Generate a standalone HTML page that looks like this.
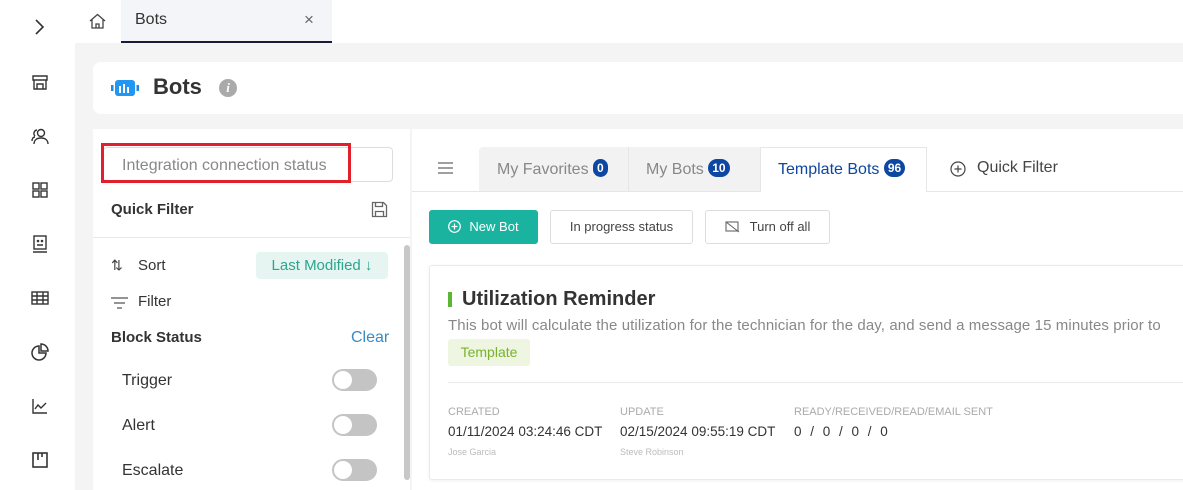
<!DOCTYPE html>
<html><head><style>
*{box-sizing:border-box;margin:0;padding:0}
body{width:1183px;height:490px;overflow:hidden;background:#f4f4f5;font-family:"Liberation Sans",sans-serif;color:#333;position:relative}
.abs{position:absolute}
.side{left:0;top:0;width:75px;height:490px;background:#fff}
.ic{position:absolute;left:31px;width:18px;height:18px}
.tog{position:absolute;left:332px;width:45px;height:22px;border-radius:11px;background:#c4c4c4}
.tog:after{content:"";position:absolute;left:2px;top:2px;width:18px;height:18px;border-radius:50%;background:#fff}
.badge{display:inline-block;background:#0d47a1;color:#fff;border-radius:9px;font-size:12px;font-weight:bold;padding:2px 4px;line-height:14px;vertical-align:2px}
.btn{position:absolute;top:210px;height:34px;border:1px solid #ddd;border-radius:3px;background:#fff;font-size:13px;color:#444;line-height:32px;text-align:center}
</style></head><body>
<div class="abs side">
<svg class="ic" style="top:18px" viewBox="0 0 18 18"><path d="M5 2l7 7-7 7" fill="none" stroke="#333" stroke-width="1.6"/></svg>
<svg class="ic" style="top:73px" viewBox="0 0 18 18" fill="none" stroke="#333" stroke-width="1.4"><path d="M2 3h14v4H2zM3 7v9h12V7M6 16v-5h6v5"/></svg>
<svg class="ic" style="top:127px" viewBox="0 0 18 18" fill="none" stroke="#333" stroke-width="1.4"><circle cx="10" cy="6" r="3.5"/><path d="M3 17c0-4 3-6 7-6s7 2 7 6M6 3a3.5 3.5 0 0 0-2 6M1 14c0-2 1-4 3-4"/></svg>
<svg class="ic" style="top:181px" viewBox="0 0 18 18" fill="none" stroke="#333" stroke-width="1.4"><rect x="2" y="2" width="6" height="6"/><rect x="10" y="2" width="6" height="6"/><rect x="2" y="10" width="6" height="6"/><rect x="10" y="10" width="6" height="6"/></svg>
<svg class="ic" style="top:235px" viewBox="0 0 18 18" fill="none" stroke="#333" stroke-width="1.4"><rect x="3" y="1" width="12" height="13"/><path d="M2 17h14M6 10h6"/><circle cx="7" cy="6" r=".6"/><circle cx="11" cy="6" r=".6"/></svg>
<svg class="ic" style="top:289px" viewBox="0 0 18 18" fill="none" stroke="#333" stroke-width="1.4"><rect x="1" y="3" width="16" height="12"/><path d="M1 7h16M1 11h16M6 3v12M12 3v12"/></svg>
<svg class="ic" style="top:343px" viewBox="0 0 18 18" fill="none" stroke="#333" stroke-width="1.5"><path d="M8 3a7 7 0 1 0 7 7H8z"/><path d="M10 1a7 7 0 0 1 7 7h-7z"/></svg>
<svg class="ic" style="top:397px" viewBox="0 0 18 18" fill="none" stroke="#333" stroke-width="1.4"><path d="M2 2v14h14M4 12l3-4 3 3 5-5"/></svg>
<svg class="ic" style="top:451px" viewBox="0 0 18 18" fill="none" stroke="#333" stroke-width="1.6"><rect x="2" y="2" width="14" height="14"/><path d="M7 2v7M11 2v4"/></svg>
</div>
<div class="abs" style="left:75px;top:0;width:1108px;height:43px;background:#fff"></div>
<svg class="abs" style="left:89px;top:13px" width="17" height="17" viewBox="0 0 17 17" fill="none" stroke="#444" stroke-width="1.3"><path d="M1 8l7.5-6.5L16 8M3 6.5V15h11V6.5M7 15v-4h3v4"/></svg>
<div class="abs" style="left:121px;top:0;width:211px;height:43px;background:#f4f5f8;border-bottom:2px solid #1a1a3a"></div>
<div class="abs" style="left:135px;top:11px;font-size:16px;color:#333">Bots</div>
<div class="abs" style="left:304px;top:10px;font-size:17px;color:#666">×</div>

<div class="abs" style="left:93px;top:62px;width:1100px;height:52px;background:#fff;border-radius:8px"></div>
<svg class="abs" style="left:111px;top:79px" width="28" height="18" viewBox="0 0 28 18"><rect x="0" y="6" width="2.5" height="6" fill="#1e88e5"/><rect x="25.5" y="6" width="2.5" height="6" fill="#1e88e5"/><rect x="4" y="1" width="20" height="16" rx="3" fill="#2196f3"/><rect x="8" y="7" width="2" height="7" fill="#fff"/><rect x="12" y="5" width="2" height="9" fill="#fff"/><rect x="16" y="8" width="2" height="6" fill="#fff"/></svg>
<div class="abs" style="left:153px;top:74px;font-size:22px;font-weight:bold;color:#333">Bots</div>
<div class="abs" style="left:219px;top:79px;width:18px;height:18px;border-radius:50%;background:#aaa;color:#fff;font:italic bold 13px 'Liberation Serif',serif;text-align:center;line-height:18px">i</div>

<div class="abs" style="left:93px;top:129px;width:317px;height:361px;background:#fff"></div>
<div class="abs" style="left:103px;top:147px;width:290px;height:35px;border:1px solid #ddd;border-radius:4px"></div>
<div class="abs" style="left:101px;top:143px;width:250px;height:40px;border:3px solid #e0202a"></div>
<div class="abs" style="left:122px;top:157px;font-size:16px;color:#888">Integration connection status</div>
<div class="abs" style="left:111px;top:201px;font-size:15px;font-weight:bold">Quick Filter</div>
<svg class="abs" style="left:371px;top:201px" width="17" height="17" viewBox="0 0 17 17" fill="none" stroke="#666" stroke-width="1.3"><path d="M1.5 1.5h11l3 3v11h-14z M4.5 1.5v4h7v-4M4.5 15.5v-5h8v5"/></svg>
<div class="abs" style="left:93px;top:237px;width:317px;height:1px;background:#e8e8e8"></div>
<div class="abs" style="left:404px;top:245px;width:6px;height:235px;background:#c8c8c8;border-radius:3px"></div>
<div class="abs" style="left:111px;top:257px;font-size:14px;color:#444">⇅</div>
<div class="abs" style="left:138px;top:257px;font-size:15px">Sort</div>
<div class="abs" style="left:256px;top:252px;width:132px;height:27px;background:#e6f5f2;border-radius:4px;color:#2ba58e;font-size:15px;line-height:27px;text-align:center">Last Modified ↓</div>
<svg class="abs" style="left:111px;top:296px" width="17" height="14" viewBox="0 0 17 14" stroke="#555" stroke-width="1.3"><path d="M0 2h17M3 7h11M6 12h5"/></svg>
<div class="abs" style="left:138px;top:293px;font-size:15px">Filter</div>
<div class="abs" style="left:111px;top:329px;font-size:15px;font-weight:bold">Block Status</div>
<div class="abs" style="left:351px;top:329px;font-size:16px;color:#3a8ac4">Clear</div>
<div class="abs" style="left:122px;top:372px;font-size:16px">Trigger</div>
<div class="tog" style="top:369px"></div>
<div class="abs" style="left:122px;top:417px;font-size:16px">Alert</div>
<div class="tog" style="top:414px"></div>
<div class="abs" style="left:122px;top:462px;font-size:16px">Escalate</div>
<div class="tog" style="top:459px"></div>

<div class="abs" style="left:412px;top:129px;width:771px;height:361px;background:#fff"></div>
<div class="abs" style="left:412px;top:191px;width:771px;height:1px;background:#e6e6e6"></div>
<svg class="abs" style="left:438px;top:162px" width="15" height="12" stroke="#666" stroke-width="1.3"><path d="M0 1h15M0 6h15M0 11h15"/></svg>
<div class="abs" style="left:479px;top:147px;width:281px;height:44px;background:#f2f2f2;border-top-left-radius:4px"></div>
<div class="abs" style="left:628px;top:147px;width:1px;height:44px;background:#e6e6e6"></div>
<div class="abs" style="left:497px;top:159px;font-size:16px;color:#888">My Favorites <span class="badge">0</span></div>
<div class="abs" style="left:646px;top:159px;font-size:16px;color:#888">My Bots <span class="badge">10</span></div>
<div class="abs" style="left:760px;top:147px;width:167px;height:45px;background:#fff;border:1px solid #e6e6e6;border-bottom:none"></div>
<div class="abs" style="left:778px;top:159px;font-size:16px;color:#0d47a1">Template Bots <span class="badge">96</span></div>
<svg class="abs" style="left:950px;top:161px" width="16" height="16" fill="none" stroke="#444" stroke-width="1.2"><circle cx="8" cy="8" r="7"/><path d="M8 4.5v7M4.5 8h7"/></svg>
<div class="abs" style="left:977px;top:159px;font-size:16px;color:#444">Quick Filter</div>

<div class="btn" style="left:429px;width:109px;background:#1ab39f;border-color:#1ab39f;color:#fff">
<svg style="vertical-align:-2px;margin-right:8px" width="13" height="13" fill="none" stroke="#fff" stroke-width="1.2"><circle cx="6.5" cy="6.5" r="5.8"/><path d="M6.5 3.5v6M3.5 6.5h6"/></svg>New Bot</div>
<div class="btn" style="left:550px;width:143px">In progress status</div>
<div class="btn" style="left:705px;width:125px"><svg style="vertical-align:-2px;margin-right:10px" width="15" height="12" fill="none" stroke="#666" stroke-width="1.1"><rect x="1" y="1" width="12" height="9"/><path d="M1 1l13 10"/></svg>Turn off all</div>

<div class="abs" style="left:429px;top:265px;width:770px;height:215px;border:1px solid #eaeaea;border-radius:3px;box-shadow:0 1px 3px rgba(0,0,0,.06)"></div>
<div class="abs" style="left:448px;top:292px;width:4px;height:15px;background:#5db536"></div>
<div class="abs" style="left:462px;top:288px;font-size:20px;font-weight:bold;color:#333">Utilization Reminder</div>
<div class="abs" style="left:448px;top:317px;font-size:15px;letter-spacing:0.1px;color:#888;white-space:nowrap">This bot will calculate the utilization for the technician for the day, and send a message 15 minutes prior to</div>
<div class="abs" style="left:448px;top:339px;width:82px;height:27px;background:#eef5e1;border-radius:3px;color:#79b22d;font-size:14px;line-height:27px;text-align:center">Template</div>
<div class="abs" style="left:448px;top:382px;width:735px;height:1px;background:#ececec"></div>
<div class="abs" style="left:448px;top:406px;font-size:11px;color:#aaa">CREATED</div>
<div class="abs" style="left:620px;top:406px;font-size:11px;color:#aaa">UPDATE</div>
<div class="abs" style="left:794px;top:406px;font-size:11px;color:#aaa">READY/RECEIVED/READ/EMAIL SENT</div>
<div class="abs" style="left:448px;top:424px;font-size:13.5px;color:#333">01/11/2024 03:24:46 CDT</div>
<div class="abs" style="left:620px;top:424px;font-size:13.5px;color:#333">02/15/2024 09:55:19 CDT</div>
<div class="abs" style="left:794px;top:424px;font-size:13.5px;color:#333;word-spacing:5px">0 / 0 / 0 / 0</div>
<div class="abs" style="left:448px;top:447px;font-size:9px;color:#bbb">Jose Garcia</div>
<div class="abs" style="left:620px;top:447px;font-size:9px;color:#bbb">Steve Robinson</div>
</body></html>
